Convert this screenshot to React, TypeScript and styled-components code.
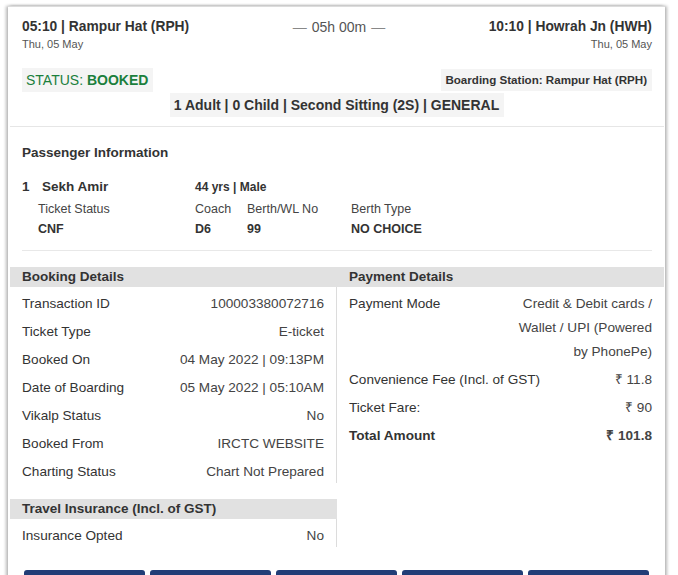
import React from 'react'
import styled, { createGlobalStyle } from 'styled-components'

const GlobalStyle = createGlobalStyle`
  body {
    margin: 0;
    background: #fff;
    font-family: 'Liberation Sans', Arial, sans-serif;
    color: #333;
  }
`

const Card = styled.div`
  margin: 6px 0 0 8px;
  width: 657px;
  box-sizing: border-box;
  padding: 0 1px 0 2px;
  border-top: 1px solid #dcdcdc;
  background: #fff;
  box-shadow: -2px 0 3px rgba(0, 0, 0, 0.28), 2px 0 3px rgba(0, 0, 0, 0.28);
`

const Summary = styled.div`
  padding: 11px 12px 9px;
  border-bottom: 1px solid #e6e6e6;
`

const JourneyRow = styled.div`
  display: flex;
  justify-content: space-between;
  align-items: flex-start;
`

const Station = styled.div<{ $align?: 'left' | 'right' }>`
  display: flex;
  flex-direction: column;
  align-items: ${(p) => (p.$align === 'right' ? 'flex-end' : 'flex-start')};
`

const StationName = styled.div`
  font-size: 13.8px;
  font-weight: bold;
  line-height: 18px;
  color: #333;
`

const StationDate = styled.div`
  margin-top: 1px;
  font-size: 11px;
  line-height: 14px;
  color: #555;
`

const Duration = styled.div`
  font-size: 14px;
  line-height: 18px;
  color: #555;
  span {
    color: #888;
    margin: 0 5px;
  }
`

const StatusRow = styled.div`
  margin-top: 17px;
  display: flex;
  justify-content: space-between;
  align-items: center;
`

const ClassRow = styled.div`
  margin-top: 1px;
  display: flex;
  justify-content: center;
`

const Chip = styled.div<{ $size?: 'small' | 'normal' }>`
  background: #f4f4f4;
  font-size: ${(p) => (p.$size === 'small' ? '11.6px' : '14px')};
  line-height: ${(p) => (p.$size === 'small' ? '22px' : '24px')};
  padding: 0 5px 0 4px;
  font-weight: bold;
  color: #333;
`

const StatusChip = styled(Chip)`
  font-weight: normal;
  color: #1b7f3c;
  b {
    font-weight: bold;
  }
`

const PassengerSection = styled.div`
  padding: 17px 12px 0;
`

const PassengerInner = styled.div`
  padding-bottom: 11px;
  border-bottom: 1px solid #e8e8e8;
`

const SectionTitle = styled.div`
  font-size: 13.5px;
  line-height: 18px;
  font-weight: bold;
  color: #333;
`

const PassengerHead = styled.div`
  margin-top: 16px;
  display: grid;
  grid-template-columns: 20px 153px auto;
  align-items: baseline;
  font-weight: bold;
  color: #333;
`

const PassengerName = styled.div`
  font-size: 13.5px;
  line-height: 18px;
`

const PassengerMeta = styled.div`
  font-size: 12px;
  line-height: 18px;
`

const PassengerGrid = styled.div`
  margin: 3px 0 0 16px;
  display: grid;
  grid-template-columns: 157px 52px 104px 1fr;
  font-size: 12.5px;
  line-height: 20px;
`

const GridLabel = styled.div`
  color: #444;
`

const GridValue = styled.div`
  color: #333;
  font-weight: bold;
`

const DetailsGrid = styled.div`
  margin-top: 16px;
  display: grid;
  grid-template-columns: 327px 327px;
`

const Column = styled.div`
  display: flex;
  flex-direction: column;
`

const BarTitle = styled.div<{ $spaced?: boolean }>`
  margin-top: ${(p) => (p.$spaced ? '16px' : '0')};
  background: #e1e1e1;
  padding: 0 12px;
  font-size: 13.5px;
  line-height: 20px;
  font-weight: bold;
  color: #333;
`

const RowList = styled.div<{ $divider?: boolean }>`
  display: flex;
  flex-direction: column;
  border-right: ${(p) => (p.$divider ? '1px solid #dcdcdc' : 'none')};
`

const Row = styled.div<{ $strong?: boolean }>`
  display: flex;
  justify-content: space-between;
  align-items: flex-start;
  gap: 10px;
  padding: 5px 12px 0;
  margin-bottom: -1px;
  font-size: 13.6px;
  line-height: 24px;
  font-weight: ${(p) => (p.$strong ? 'bold' : 'normal')};
`

const Label = styled.div`
  color: #333;
  white-space: nowrap;
`

const Value = styled.div<{ $wrap?: boolean }>`
  color: #444;
  text-align: right;
  max-width: ${(p) => (p.$wrap ? '140px' : 'none')};
`

const ButtonBar = styled.div`
  margin-top: 23px;
  padding-left: 14px;
  display: flex;
  gap: 5px;
`

const ActionButton = styled.button`
  width: 121px;
  height: 36px;
  border: none;
  border-radius: 3px;
  background: #213d77;
  color: #fff;
  padding: 0;
`

const booking: [string, string][] = [
  ['Transaction ID', '100003380072716'],
  ['Ticket Type', 'E-ticket'],
  ['Booked On', '04 May 2022 | 09:13PM'],
  ['Date of Boarding', '05 May 2022 | 05:10AM'],
  ['Vikalp Status', 'No'],
  ['Booked From', 'IRCTC WEBSITE'],
  ['Charting Status', 'Chart Not Prepared'],
]

const App: React.FC = () => {
  return (
    <>
      <GlobalStyle />
      <Card>
        <Summary>
          <JourneyRow>
            <Station>
              <StationName>05:10 | Rampur Hat (RPH)</StationName>
              <StationDate>Thu, 05 May</StationDate>
            </Station>
            <Duration>
              <span>—</span>05h 00m<span>—</span>
            </Duration>
            <Station $align="right">
              <StationName>10:10 | Howrah Jn (HWH)</StationName>
              <StationDate>Thu, 05 May</StationDate>
            </Station>
          </JourneyRow>
          <StatusRow>
            <StatusChip>
              STATUS: <b>BOOKED</b>
            </StatusChip>
            <Chip $size="small">Boarding Station: Rampur Hat (RPH)</Chip>
          </StatusRow>
          <ClassRow>
            <Chip>1 Adult | 0 Child | Second Sitting (2S) | GENERAL</Chip>
          </ClassRow>
        </Summary>

        <PassengerSection>
          <PassengerInner>
            <SectionTitle>Passenger Information</SectionTitle>
            <PassengerHead>
              <PassengerName>1</PassengerName>
              <PassengerName>Sekh Amir</PassengerName>
              <PassengerMeta>44 yrs | Male</PassengerMeta>
            </PassengerHead>
            <PassengerGrid>
              <GridLabel>Ticket Status</GridLabel>
              <GridLabel>Coach</GridLabel>
              <GridLabel>Berth/WL No</GridLabel>
              <GridLabel>Berth Type</GridLabel>
              <GridValue>CNF</GridValue>
              <GridValue>D6</GridValue>
              <GridValue>99</GridValue>
              <GridValue>NO CHOICE</GridValue>
            </PassengerGrid>
          </PassengerInner>
        </PassengerSection>

        <DetailsGrid>
          <Column>
            <BarTitle>Booking Details</BarTitle>
            <RowList $divider>
              {booking.map(([label, value]) => (
                <Row key={label}>
                  <Label>{label}</Label>
                  <Value>{value}</Value>
                </Row>
              ))}
            </RowList>
            <BarTitle $spaced>Travel Insurance (Incl. of GST)</BarTitle>
            <RowList $divider>
              <Row>
                <Label>Insurance Opted</Label>
                <Value>No</Value>
              </Row>
            </RowList>
          </Column>
          <Column>
            <BarTitle>Payment Details</BarTitle>
            <RowList>
              <Row>
                <Label>Payment Mode</Label>
                <Value $wrap>Credit &amp; Debit cards / Wallet / UPI (Powered by PhonePe)</Value>
              </Row>
              <Row>
                <Label>Convenience Fee (Incl. of GST)</Label>
                <Value>₹ 11.8</Value>
              </Row>
              <Row>
                <Label>Ticket Fare:</Label>
                <Value>₹ 90</Value>
              </Row>
              <Row $strong>
                <Label>Total Amount</Label>
                <Value>₹ 101.8</Value>
              </Row>
            </RowList>
          </Column>
        </DetailsGrid>

        <ButtonBar>
          <ActionButton />
          <ActionButton />
          <ActionButton />
          <ActionButton />
          <ActionButton />
        </ButtonBar>
      </Card>
    </>
  )
}

export default App
